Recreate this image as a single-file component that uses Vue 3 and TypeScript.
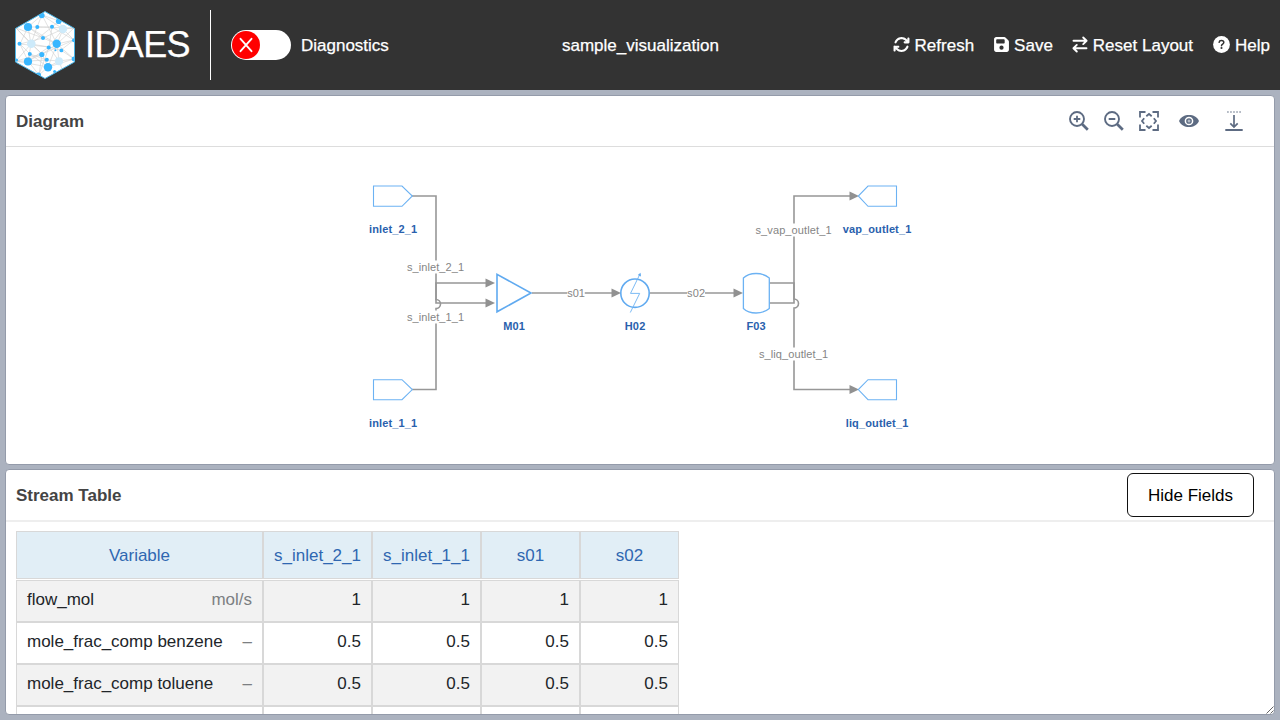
<script setup lang="ts">
interface Dot { x: number; y: number; r: number; soft?: boolean }
interface Row { name: string; unit: string; values: string[] }
interface Label { text: string; x: number; y: number; w: number }

const dots: Dot[] = [
  { x: 41.8, y: 15.5, r: 2.8 }, { x: 28, y: 27, r: 4.1 }, { x: 37.3, y: 27, r: 2 },
  { x: 52, y: 26.7, r: 2 }, { x: 58.7, y: 21.3, r: 2.8 }, { x: 63, y: 29, r: 4.2, soft: true },
  { x: 43, y: 38, r: 2 }, { x: 56.7, y: 43.8, r: 4.2 }, { x: 31.3, y: 43.8, r: 4.3, soft: true },
  { x: 19.5, y: 43.8, r: 2 }, { x: 48.7, y: 47.4, r: 2 }, { x: 55.5, y: 50.2, r: 1 },
  { x: 61.4, y: 50.4, r: 1.9 }, { x: 29.8, y: 54, r: 2 }, { x: 41.8, y: 54.5, r: 2.6 },
  { x: 28, y: 61.5, r: 4.1 }, { x: 46.8, y: 59.8, r: 2 }, { x: 59, y: 61.3, r: 4, soft: true },
  { x: 48, y: 67.3, r: 4.2 }, { x: 74, y: 40.3, r: 2 }, { x: 74, y: 59, r: 2.4 },
  { x: 38.5, y: 75, r: 2.6 }, { x: 54.6, y: 71.5, r: 1.5 }, { x: 16.5, y: 60, r: 1.6 },
]

const mesh =
  'M42 15L28 27L20 44L30 54L28 61L39 75L48 67L59 61L74 59L61 50L74 40L63 29L59 21L42 15L63 29L43 38L28 27L52 27L59 21' +
  'M42 15L37 27L31 44L16 28L43 38L57 44L74 40L52 27L31 44L42 54L57 44L59 61L47 60L28 61L16 61L31 44L49 47L61 50' +
  'M28 27L57 44L63 29L74 28L57 44M16 28L42 54L48 67L30 54L47 60M20 44L49 47L59 61L62 69M63 29L49 47L28 61L20 44L43 38' +
  'M42 15L57 44L48 67L74 59L57 44M39 75L42 54L28 61L31 44L28 27M16 61L48 67M74 40L42 54L16 61M37 27L74 28M52 27L49 47L39 75'

const columns: string[] = ['Variable', 's_inlet_2_1', 's_inlet_1_1', 's01', 's02']
const rows: Row[] = [
  { name: 'flow_mol', unit: 'mol/s', values: ['1', '1', '1', '1'] },
  { name: 'mole_frac_comp benzene', unit: '–', values: ['0.5', '0.5', '0.5', '0.5'] },
  { name: 'mole_frac_comp toluene', unit: '–', values: ['0.5', '0.5', '0.5', '0.5'] },
  { name: '', unit: '', values: ['', '', '', ''] },
]

const links: string[] = [
  'M412 196H436V303H487',
  'M412 389.5H436V308.5A4.5 4.5 0 0 0 436 299.5V283H487',
  'M532 293H613', 'M650 293H735',
  'M769 303H794V196H850',
  'M769 283H794V299A4.5 4.5 0 0 1 794 308V389.5H850',
]
const arrows: number[][] = [[495, 283], [495, 303], [621, 293], [743, 293], [859, 196], [859, 389.5]]

const linkLabels: Label[] = [
  { text: 's_inlet_2_1', x: 435.5, y: 271, w: 57 }, { text: 's_inlet_1_1', x: 435.5, y: 321, w: 57 },
  { text: 's01', x: 576, y: 297, w: 17.5 }, { text: 's02', x: 696, y: 297, w: 18 },
  { text: 's_vap_outlet_1', x: 793.5, y: 234, w: 76 }, { text: 's_liq_outlet_1', x: 793.5, y: 358, w: 69 },
]
const unitLabels: Label[] = [
  { text: 'inlet_2_1', x: 393, y: 233, w: 48 }, { text: 'inlet_1_1', x: 393, y: 427, w: 48 },
  { text: 'M01', x: 514, y: 330, w: 21.5 }, { text: 'H02', x: 635, y: 330, w: 20.5 },
  { text: 'F03', x: 756, y: 330, w: 19 }, { text: 'vap_outlet_1', x: 877, y: 233, w: 68.5 },
  { text: 'liq_outlet_1', x: 877, y: 427, w: 62.5 },
]
</script>

<template>
  <div class="app">
    <header class="topbar">
      <div class="brand">
        <svg class="logo" viewBox="14 10 62 70" width="62" height="70">
          <defs><clipPath id="hex"><path d="M45 11.5L74.5 28.5V62L45 78.5L15.5 62V28.5Z" /></clipPath></defs>
          <g clip-path="url(#hex)">
            <rect x="14" y="10" width="62" height="70" fill="#fff" />
            <path :d="mesh" fill="none" stroke="#cfcfcf" stroke-width=".6" />
            <circle v-for="(d, i) in dots" :key="i" :cx="d.x" :cy="d.y" :r="d.r" :fill="d.soft ? '#cdeafa' : '#38b6ff'" />
          </g>
          <path d="M45 11.5L74.5 28.5V62L45 78.5L15.5 62V28.5Z" fill="none" stroke="#4bb4e6" stroke-width="1" />
        </svg>
        <span class="brand-name">IDAES</span>
      </div>
      <div class="diag">
        <span class="toggle"><span class="knob"><svg width="14" height="16" viewBox="0 0 14 16"><path d="M1.5 1.8L12.5 14.2M12.5 1.8L1.5 14.2" stroke="#fff" stroke-width="1.9" stroke-linecap="round" /></svg></span></span>
        <span class="t">Diagnostics</span>
      </div>
      <div class="file-name">sample_visualization</div>
      <nav class="actions">
        <a class="action"><svg width="17" height="17" viewBox="0 0 512 512" fill="#fff"><path d="M105 203c8-23 21-44 40-62 62-62 163-62 225 0l18 18h-36c-18 0-32 14-32 32s14 32 32 32h112c18 0 32-14 32-32V79c0-18-14-32-32-32s-32 14-32 32v35l-17-17C328 10 187 10 100 97c-24 24-42 53-53 84-6 17 3 35 20 41s32-3 38-19zM39 289c-5 1-10 4-14 8s-7 9-8 14c-1 2-1 4-1 7v115c0 18 14 32 32 32s32-14 32-32v-35l18 17c87 87 228 87 315 0 24-24 42-53 53-84 6-17-3-35-20-41s-35 3-41 20c-8 22-21 44-39 62-62 62-163 62-225 0l-18-18h37c18 0 32-14 32-32s-14-32-32-32H48c-3 0-6 0-9-1z" /></svg><span class="t">Refresh</span></a>
        <a class="action save"><svg width="15" height="17" viewBox="0 0 448 512" fill="#fff"><path fill-rule="evenodd" d="M64 32C29 32 0 61 0 96v320c0 35 29 64 64 64h320c35 0 64-29 64-64V174c0-17-7-33-19-45l-78-78c-12-12-28-19-45-19H64zm0 96c0-18 14-32 32-32h192c18 0 32 14 32 32v64c0 18-14 32-32 32H96c-18 0-32-14-32-32v-64zm160 160a64 64 0 1 1 0 128 64 64 0 1 1 0-128z" /></svg><span class="t">Save</span></a>
        <a class="action reset"><svg width="16" height="17" viewBox="0 0 16 17" fill="none" stroke="#fff" stroke-width="1.9" stroke-linecap="round" stroke-linejoin="round"><path d="M1.5 4.8H14.5M11.2 1.5L14.6 4.8L11.2 8.1M14.5 12.2H1.5M4.8 8.9L1.4 12.2L4.8 15.5" /></svg><span class="t">Reset Layout</span></a>
        <a class="action help"><svg width="17" height="17" viewBox="0 0 17 17"><circle cx="8.5" cy="8.5" r="8.4" fill="#fff" /><path d="M6.1 6.3C6.3 5 7.1 4.6 8.4 4.6C9.9 4.6 10.8 5.4 10.8 6.6C10.8 8.1 8.5 8.2 8.5 9.8" fill="none" stroke="#333" stroke-width="1.5" stroke-linecap="round" /><circle cx="8.5" cy="12" r="1.05" fill="#333" /></svg><span class="t">Help</span></a>
      </nav>
    </header>

    <section class="panel diagram-panel">
      <div class="panel-head">
        <h2>Diagram</h2>
        <div class="tools">
          <svg v-for="k in 2" :key="k" width="20" height="20" viewBox="0 0 20 20" fill="none" stroke="#5d6b82">
            <circle cx="8" cy="8" r="7" stroke-width="1.9" />
            <path d="M13 13L18.8 18.8" stroke-width="2.7" />
            <path :d="k === 1 ? 'M4.7 8H11.3M8 4.7V11.3' : 'M4.7 8H11.3'" stroke-width="1.8" />
          </svg>
          <svg width="20" height="20" viewBox="0 0 20 20" fill="none" stroke="#5d6b82" stroke-width="1.8">
            <path d="M1 6.5V1H6.5M13.5 1H19V6.5M19 13.5V19H13.5M6.5 19H1V13.5" />
            <path d="M7.3 5.2L10 3L12.7 5.2M7.3 14.8L10 17L12.7 14.8M5.2 7.3L3 10L5.2 12.7M14.8 7.3L17 10L14.8 12.7" />
          </svg>
          <svg class="eye" width="20" height="14" viewBox="0 0 20 14">
            <path d="M0 7C2 2.9 5.5 1 10 1S18 2.9 20 7C18 11.1 14.5 13 10 13S2 11.1 0 7Z" fill="#5d6b82" />
            <circle cx="10" cy="7" r="3.6" fill="#5d6b82" stroke="#fff" stroke-width="1.5" />
            <circle cx="10" cy="7" r="1.5" fill="#b4bbc6" />
          </svg>
          <svg class="download" width="18" height="20" viewBox="0 0 18 20" fill="none" stroke="#5d6b82">
            <path d="M2 1H16" stroke-width="1.6" stroke-dasharray="1.8 1.25" opacity=".6" />
            <path d="M9 4V15.5M5.3 12.3L9 16L12.7 12.3" stroke-width="1.7" />
            <path d="M.3 19H17.7" stroke-width="1.9" />
          </svg>
        </div>
      </div>
      <svg class="canvas" viewBox="6 147 1268 317" width="1268" height="317">
        <g fill="none" stroke="#979797" stroke-width="1.6"><path v-for="l in links" :key="l" :d="l" /></g>
        <path v-for="(a, i) in arrows" :key="i" :d="`M${a[0]} ${a[1]}l-9.5 -4.5v9z`" fill="#919191" />
        <g fill="#fff" stroke="#6cb2f3" stroke-width="1.1">
          <path d="M373.5 186H402L412.3 196L402 206.3H373.5Z" />
          <path d="M373.5 379.7H402L412.3 389.6L402 399.7H373.5Z" />
          <path d="M896.5 186H868L858.3 196L868 206.3H896.5Z" />
          <path d="M896.5 379.7H868L858.3 389.6L868 399.7H896.5Z" />
          <path d="M497 274.4V311.8L531 293Z" stroke-width="1.6" stroke="#60aaf0" />
          <path d="M743.4 278Q748 273.5 756 273.5T769.3 278V308.5Q764 313 756 313T743.4 308.5Z" stroke-width="1.3" />
          <circle cx="635" cy="293.2" r="14.2" stroke="#60aaf0" stroke-width="1.6" />
          <path d="M640 274L630.5 293.4H639.7L630.3 312.5" fill="none" stroke-width=".9" />
          <path d="M640.5 272.8L641 276.5L637.8 275Z" fill="#60aaf0" stroke="none" />
        </g>
        <g v-for="l in linkLabels" :key="l.text">
          <rect :x="l.x - l.w / 2" :y="l.y - 10.5" :width="l.w" height="13" fill="#fff" />
          <text class="link-label" :x="l.x" :y="l.y" :textLength="l.w">{{ l.text }}</text>
        </g>
        <text v-for="l in unitLabels" :key="l.text" class="unit-label" :x="l.x" :y="l.y" :textLength="l.w">{{ l.text }}</text>
      </svg>
    </section>

    <section class="panel table-panel">
      <div class="panel-head">
        <h2>Stream Table</h2>
        <button class="hide-fields">Hide Fields</button>
      </div>
      <div class="grid">
        <div class="grid-row head">
          <div v-for="c in columns" :key="c" class="cell">{{ c }}</div>
        </div>
        <div v-for="(r, i) in rows" :key="i" class="grid-row" :class="{ odd: i % 2 === 0 }">
          <div class="cell name"><span>{{ r.name }}</span><span class="unit">{{ r.unit }}</span></div>
          <div v-for="(v, j) in r.values" :key="j" class="cell value">{{ v }}</div>
        </div>
      </div>
      <svg class="grip" width="8" height="8" viewBox="0 0 8 8"><path d="M.5 7.5L7.5 .5M4.5 7.5L7.5 4.5" stroke="#555" stroke-width=".9" /></svg>
    </section>
  </div>
</template>

<style>
body { margin: 0; }
</style>

<style scoped>
.app {
  box-sizing: border-box;
  width: 1280px;
  height: 720px;
  overflow: hidden;
  display: flex;
  flex-direction: column;
  background: #abb2bf;
  font-family: "Liberation Sans", Arial, sans-serif;
  font-size: 17px;
  line-height: 20px;
}
.topbar {
  position: relative;
  flex: none;
  height: 90px;
  display: flex;
  align-items: center;
  background: #333;
  color: #fff;
  -webkit-text-stroke: .25px #fff;
}
.brand {
  box-sizing: border-box;
  width: 211px;
  height: 70px;
  padding-left: 14px;
  display: flex;
  align-items: center;
  border-right: 1px solid #fff;
}
.brand-name { margin-left: 9px; font-size: 36px; line-height: 70px; letter-spacing: -.6px; }
.diag { display: flex; align-items: center; gap: 10px; margin-left: 20px; }
.t { padding-top: 2px; }
.toggle { box-sizing: border-box; width: 60px; height: 30px; padding: 1px; border-radius: 15px; background: #fff; }
.knob { display: flex; align-items: center; justify-content: center; width: 28px; height: 28px; border-radius: 50%; background: #f00; }
.file-name { position: absolute; left: 562px; top: 36px; }
.actions { display: flex; align-items: center; margin: 0 10px 0 auto; }
.action { display: flex; align-items: center; gap: 5px; }
.action svg { position: relative; top: -1px; }
.save { margin-left: 20px; }
.reset { margin-left: 19px; }
.help { margin-left: 20px; }
.panel {
  position: relative;
  box-sizing: border-box;
  margin: 0 5px;
  border: 1px solid #949baa;
  border-radius: 4px;
  background: #fff;
  overflow: hidden;
  flex: none;
}
.diagram-panel { margin-top: 5px; height: 370px; }
.table-panel { margin-top: 4px; height: 246px; }
.panel-head {
  box-sizing: border-box;
  height: 51px;
  display: flex;
  align-items: center;
  justify-content: space-between;
  padding: 0 20px 0 10px;
  border-bottom: 1px solid #ddd;
}
.table-panel .panel-head { border-bottom: 2px solid #eee; height: 52px; }
h2 { margin: 0; padding-top: 2px; font-size: 17px; font-weight: 700; color: #444; }
.tools { display: flex; align-items: center; gap: 15px; margin-right: 11px; }
.eye { margin-left: 5px; }
.download { margin-left: 11px; }
.canvas { display: block; }
.link-label { font-size: 11px; fill: #858585; text-anchor: middle; }
.unit-label { font-size: 11px; font-weight: 700; fill: #2a61ad; text-anchor: middle; }
.hide-fields {
  box-sizing: border-box;
  width: 127px;
  height: 44px;
  padding: 2px 0 0;
  border: 1px solid #111;
  border-radius: 6px;
  background: #fff;
  color: #000;
  font: 17px/20px "Liberation Sans", Arial, sans-serif;
}
.grid { margin: 9px 0 0 10px; width: 663px; }
.grid-row { display: grid; grid-template-columns: 247px 109px 109px 99px 99px; height: 42px; background: #fff; color: #212529; }
.grid-row.odd { background: #f2f2f2; }
.grid-row.head { height: 48px; margin-bottom: 1px; background: #e1eef6; color: #2f67b1; }
.cell { box-sizing: border-box; display: flex; align-items: center; border: 1px solid #d8d8d8; padding: 0 10px 2px; }
.head .cell { justify-content: center; padding: 2px 0 0; }
.name { justify-content: space-between; }
.value { justify-content: flex-end; }
.unit { color: #7c7f82; }
.grip { position: absolute; right: 0; bottom: 0; }
</style>
